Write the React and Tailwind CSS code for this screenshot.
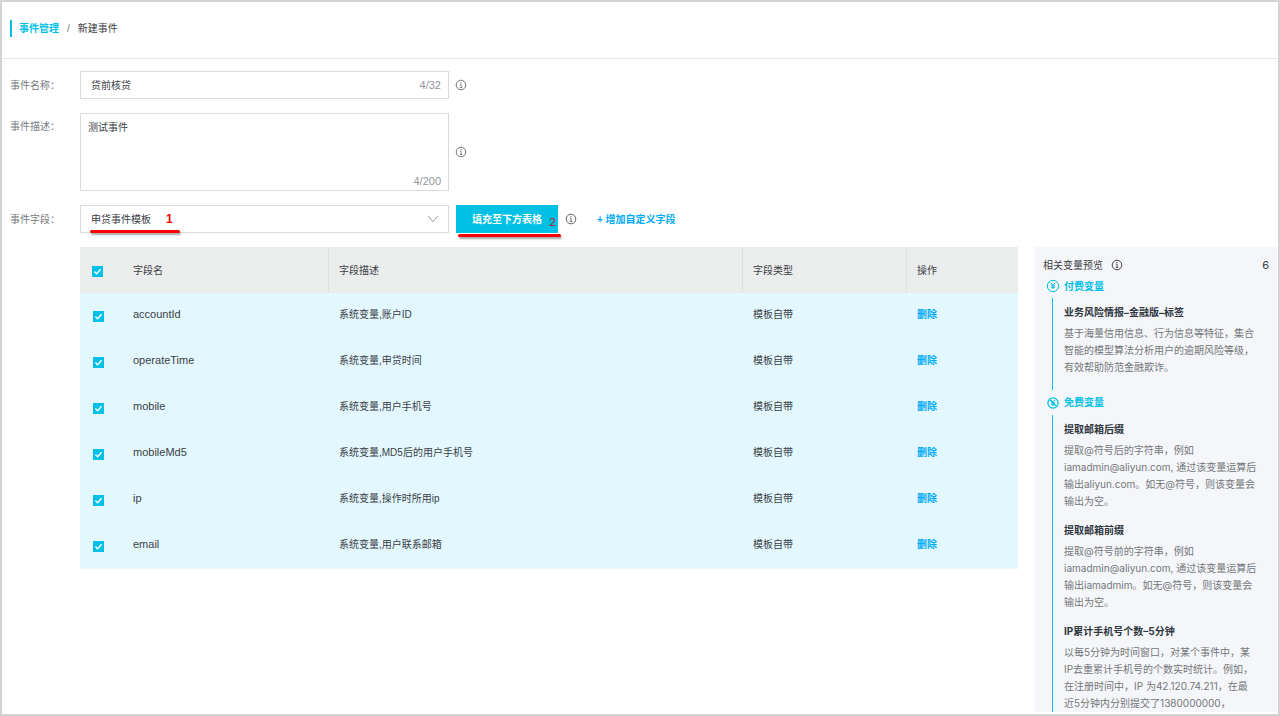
import React, { useState } from "react";

const rows = [
  ["accountId", "系统变量,账户ID"],
  ["operateTime", "系统变量,申贷时间"],
  ["mobile", "系统变量,用户手机号"],
  ["mobileMd5", "系统变量,MD5后的用户手机号"],
  ["ip", "系统变量,操作时所用ip"],
  ["email", "系统变量,用户联系邮箱"],
];

const paidItems = [
  {
    title: "业务风险情报–金融版–标签",
    lines: [
      "基于海量信用信息、行为信息等特征，集合",
      "智能的模型算法分析用户的逾期风险等级，",
      "有效帮助防范金融欺诈。",
    ],
  },
];

const freeItems = [
  {
    title: "提取邮箱后缀",
    lines: [
      "提取@符号后的字符串，例如",
      "iamadmin@aliyun.com, 通过该变量运算后",
      "输出aliyun.com。如无@符号，则该变量会",
      "输出为空。",
    ],
  },
  {
    title: "提取邮箱前缀",
    lines: [
      "提取@符号前的字符串，例如",
      "iamadmin@aliyun.com, 通过该变量运算后",
      "输出iamadmim。如无@符号，则该变量会",
      "输出为空。",
    ],
  },
  {
    title: "IP累计手机号个数–5分钟",
    lines: [
      "以每5分钟为时间窗口，对某个事件中，某",
      "IP去重累计手机号的个数实时统计。例如，",
      "在注册时间中，IP 为42.120.74.211，在最",
      "近5分钟内分别提交了1380000000，",
    ],
  },
];

function InfoIcon({ className }) {
  return (
    <svg viewBox="0 0 12 12" className={`size-3 shrink-0 ${className}`} fill="none" stroke="currentColor" aria-hidden="true">
      <circle cx="6" cy="6" r="4.8" strokeWidth="1" />
      <path d="M5 5.2H6.1V8.5M4.8 8.5H7.3" strokeWidth="0.9" />
      <circle cx="6" cy="3.6" r="0.7" fill="currentColor" stroke="none" />
    </svg>
  );
}

function YuanIcon({ slashed }) {
  return (
    <svg viewBox="0 0 14 14" className="size-3.5 shrink-0" fill="none" stroke="currentColor" aria-hidden="true">
      <circle cx="7" cy="7" r={slashed ? 5.1 : 5.7} strokeWidth={slashed ? 1.3 : 1} />
      <path d="M5 3.9L7 6.5L9 3.9M7 6.5V10.2M5.1 6.8H8.9M5.1 8.4H8.9" strokeWidth="1" />
      {slashed && <path d="M3.2 3.4L10.8 10.6" strokeWidth="1.3" />}
    </svg>
  );
}

function Check({ label }) {
  const [on, setOn] = useState(true);
  return (
    <span className="grid size-[11px] place-items-center">
      <input
        type="checkbox"
        aria-label={label}
        checked={on}
        onChange={() => setOn(!on)}
        className="col-start-1 row-start-1 size-[11px] appearance-none border border-[#00c1e5] bg-white checked:bg-[#00c1e5]"
      />
      <svg viewBox="0 0 11 11" className="pointer-events-none col-start-1 row-start-1 size-[11px]" fill="none" stroke="white" strokeWidth="1.4" aria-hidden="true">
        <path d="M2.4 5.6L4.6 7.7L8.6 3.3" />
      </svg>
    </span>
  );
}

function VariableGroup({ name, items, slashed, last }) {
  return (
    <section className={last ? "flex min-h-0 grow flex-col" : "mb-[3px]"}>
      <h2 className="flex h-5 items-center gap-1 font-bold text-[#00c1e5]">
        <YuanIcon slashed={slashed} />
        {name}
      </h2>
      <div className={`ml-1.5 mt-0.5 border-l border-[#00c8ea] pl-[11px] pt-0.5 ${last ? "grow overflow-hidden" : "pb-1.5"}`}>
        {items.map((item) => (
          <article key={item.title} className="mb-2">
            <h3 className="font-bold leading-[25px] text-[#2f373e]">{item.title}</h3>
            <p className="whitespace-nowrap leading-[17px] text-[#73777a]">
              {item.lines.map((line) => (
                <span key={line} className="block">{line}</span>
              ))}
            </p>
          </article>
        ))}
      </div>
    </section>
  );
}

export default function App() {
  return (
    <div className="flex h-screen flex-col overflow-hidden border-2 border-[#d3d3d3] bg-white font-['Liberation_Sans','Noto_Sans_CJK_SC',sans-serif] text-[10px] text-[#3a4046]">
      <header className="flex h-[57px] shrink-0 items-center border-b border-[#e5e6e7] pb-1 pl-2">
        <nav className="flex h-[17px] items-center border-l-2 border-[#00c1e5] pl-[7px] leading-[17px]" aria-label="面包屑">
          <a href="#events" className="font-bold text-[#00c1e5]">事件管理</a>
          <span className="px-2 text-[#777]">/</span>
          <span>新建事件</span>
        </nav>
      </header>

      <main className="flex min-h-0 grow flex-col pb-0.5 pl-2 pt-3">
        <form className="flex flex-col gap-3.5" onSubmit={(e) => e.preventDefault()}>
          <div className="flex items-center">
            <label htmlFor="name" className="w-[70px] text-[#777b7e]">事件名称：</label>
            <div className="relative w-[369px]">
              <input id="name" defaultValue="贷前核贷" className="block h-7 w-full border border-[#d9dadb] bg-white pb-0.5 pl-2.5 pr-12 outline-none" />
              <span className="absolute right-2 top-1.5 text-[11px] leading-4 text-[#92969a]">4/32</span>
            </div>
            <InfoIcon className="ml-1.5 text-[#777]" />
          </div>
          <div className="flex items-center">
            <label htmlFor="description" className="w-[70px] self-start pt-1.5 text-[#777b7e]">事件描述：</label>
            <div className="relative w-[369px]">
              <textarea id="description" defaultValue="测试事件" className="block h-[78px] w-full resize-none border border-[#d9dadb] bg-white px-[7px] py-1.5 outline-none" />
              <span className="absolute bottom-0.5 right-2 text-[11px] leading-4 text-[#92969a]">4/200</span>
            </div>
            <InfoIcon className="ml-1.5 text-[#777]" />
          </div>
          <div className="flex items-center">
            <label htmlFor="fields" className="w-[70px] text-[#777b7e]">事件字段：</label>
            <div className="relative w-[369px]">
              <select id="fields" className="block h-7 w-full appearance-none border border-[#d9dadb] bg-white pl-2.5 outline-none">
                <option>申贷事件模板</option>
              </select>
              <svg viewBox="0 0 12 12" className="pointer-events-none absolute right-2.5 top-2 size-3" fill="none" stroke="#999" aria-hidden="true">
                <path d="M1.2 3L6 8.6L10.8 3" />
              </svg>
              <span className="pointer-events-none absolute left-[86px] top-1.5 text-[12px] font-bold leading-4 text-[#fa0000]">1</span>
              <span className="pointer-events-none absolute left-2.5 top-[25px] h-[3px] w-[90px] rounded-sm bg-[#fa0000] shadow-[1px_2px_2px_rgba(0,0,0,0.35)]" />
            </div>
            <div className="relative ml-[7px]">
              <button type="button" className="block h-7 w-[102px] bg-[#00c1e5] font-bold text-white">填充至下方表格</button>
              <span className="pointer-events-none absolute right-0.5 top-[9px] font-['Lato',sans-serif] text-[12px] leading-4 text-[#b0203a]">2</span>
              <span className="pointer-events-none absolute left-0.5 top-[29px] h-[3px] w-[103px] rounded-sm bg-[#fa0000] shadow-[1px_2px_2px_rgba(0,0,0,0.35)]" />
            </div>
            <InfoIcon className="ml-[7px] text-[#666]" />
            <button type="button" className="ml-5 font-bold text-[#00aaf8]">+ 增加自定义字段</button>
          </div>
        </form>

        <div className="mt-3.5 flex min-h-0 grow items-start gap-[17px] pl-[70px]">
          <table className="min-w-0 grow table-fixed border-separate border-spacing-0 text-left">
            <colgroup>
              <col className="w-[43px]" />
              <col className="w-[206px]" />
              <col />
              <col className="w-[164px]" />
              <col className="w-[111px]" />
            </colgroup>
            <thead className="bg-[#ebecec]">
              <tr className="h-[46px]">
                <th className="pl-3 pt-0.5"><Check label="全选" /></th>
                <th className="border-r border-[#dedfe0] pl-2.5 font-normal">字段名</th>
                <th className="border-r border-[#dedfe0] pl-2.5 font-normal">字段描述</th>
                <th className="border-r border-[#dedfe0] pl-2.5 font-normal">字段类型</th>
                <th className="pl-2.5 font-normal">操作</th>
              </tr>
            </thead>
            <tbody className="bg-[#e3f8fe]">
              {rows.map(([name, desc]) => (
                <tr key={name} className="h-[46px]">
                  <td className="border-b border-[#e9f6f9] pl-[13px] pt-0.5"><Check label={name} /></td>
                  <td className="border-b border-[#e9f6f9] pb-0.5 pl-2.5 text-[11px]">{name}</td>
                  <td className="border-b border-[#e9f6f9] pb-0.5 pl-2.5">{desc}</td>
                  <td className="border-b border-[#e9f6f9] pb-0.5 pl-2.5">模板自带</td>
                  <td className="border-b border-[#e9f6f9] pb-0.5 pl-2.5">
                    <button type="button" className="font-bold text-[#00aaf8]">删除</button>
                  </td>
                </tr>
              ))}
            </tbody>
          </table>

          <aside className="mr-px flex h-full w-[242px] shrink-0 flex-col overflow-hidden bg-[#f5f6f9] px-2 pt-2 font-['Inter','Noto_Sans_CJK_SC',sans-serif]">
            <div className="flex h-5 shrink-0 items-center gap-2">
              <h2>相关变量预览</h2>
              <InfoIcon className="text-[#444]" />
              <span className="ml-auto text-[11px]">6</span>
            </div>
            <div className="flex min-h-0 grow flex-col pl-[3px] pt-px">
              <VariableGroup name="付费变量" items={paidItems} />
              <VariableGroup name="免费变量" items={freeItems} slashed last />
            </div>
          </aside>
        </div>
      </main>
    </div>
  );
}
